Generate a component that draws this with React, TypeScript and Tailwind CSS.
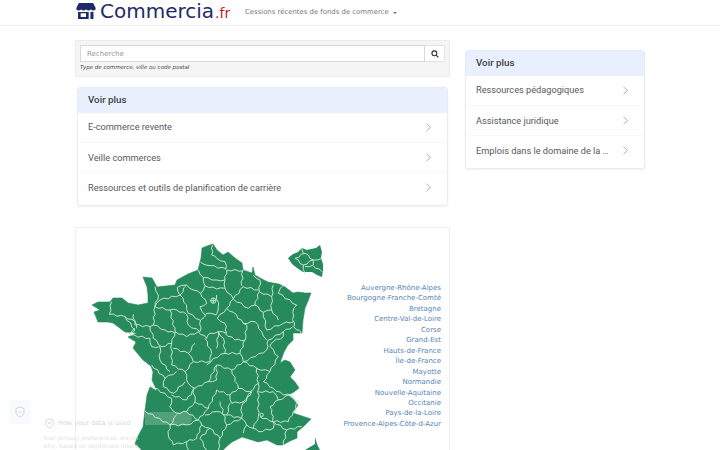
const dejavu = "font-['DejaVu_Sans',sans-serif]";

const regions = [
  "Auvergne-Rhône-Alpes",
  "Bourgogne-Franche-Comté",
  "Bretagne",
  "Centre-Val-de-Loire",
  "Corse",
  "Grand-Est",
  "Hauts-de-France",
  "Île-de-France",
  "Mayotte",
  "Normandie",
  "Nouvelle-Aquitaine",
  "Occitanie",
  "Pays-de-la-Loire",
  "Provence-Alpes-Côte-d-Azur",
];

const outline =
  "M202 248 L207 246 L213 244 L217 250 L223 255 L228 252 L235 258 L242 263 L243 270 L252 273 L253 267 L255 275 L262 279 L268 282 L273 283 L279 284 L285 287 L293 293 L298 292 L305 293 L311 293 L308 301 L305 308 L303 320 L302 333 L293 333 L293 340 L288 345 L284 352 L280 363 L285 360 L290 362 L295 370 L290 377 L295 382 L299 388 L294 392 L288 395 L293 399 L298 405 L293 413 L302 416 L311 419 L304 426 L297 432 L297 438 L290 441 L283 445 L277 445 L267 440 L258 442 L252 440 L242 437 L232 442 L225 448 L218 456 L142 456 L141 449 L135 444 L137 438 L143 427 L145 410 L147 395 L150 387 L157 391 L152 380 L153 372 L150 363 L152 367 L143 360 L133 348 L136 342 L128 337 L137 333 L125 332 L113 323 L108 322 L98 322 L94 312 L100 310 L92 305 L98 302 L110 302 L113 298 L122 298 L128 303 L138 305 L148 303 L148 295 L147 287 L143 277 L152 278 L157 287 L175 285 L177 280 L188 274 L198 270 L201 258 Z";

const inset = "M288 258 L293 254 L298 252 L302 248 L307 250 L311 249 L316 248 L320 245 L322 252 L321 258 L323 264 L323 270 L322 277 L317 275 L312 272 L303 272 L297 268 L292 264 Z";

const deptLines = [
  "M428 60 L425 90 L440 100 L465 110 L468 132",
  "M392 112 L420 122 L468 132",
  "M385 135 L400 158 L440 165 L465 165 L470 135 L520 137",
  "M400 158 L405 182 L392 205 L370 195 L350 180 L322 187",
  "M405 182 L440 192 L465 190 L490 222 L520 185 L565 195",
  "M465 165 L465 190",
  "M518 137 L515 182",
  "M550 150 L570 165 L568 200 L555 240 L580 262 L590 315",
  "M610 180 L605 215 L605 255 L625 285",
  "M640 180 L625 205 L680 240 L668 262 L672 305 L695 325",
  "M605 215 L568 200",
  "M490 222 L535 250 L555 240",
  "M605 255 L580 262",
  "M490 222 L470 250 L442 280",
  "M440 210 L445 245 L438 270 L410 265 L392 285",
  "M392 205 L410 235 L390 245 L405 270",
  "M350 180 L330 210 L350 240 L355 265 L390 285",
  "M322 187 L330 210 L270 225 L255 245",
  "M255 185 L265 210 L255 245 L300 255 L320 255 L350 268 L355 300 L390 320",
  "M255 245 L250 300 L285 315 L315 325",
  "M125 230 L118 268 L165 275 L195 290 L200 310",
  "M190 268 L195 300 L240 305 L250 300",
  "M165 275 L195 315 L180 325",
  "M195 310 L180 330 L240 340 L245 365",
  "M240 305 L250 340 L275 365 L305 355 L315 320 L300 255",
  "M315 320 L350 335 L385 320 L410 340 L420 325 L445 320",
  "M392 285 L390 320",
  "M442 280 L465 295 L470 325 L445 320 L440 370",
  "M470 250 L490 262 L520 295 L555 290 L575 320 L590 345",
  "M465 325 L495 345 L525 345 L530 300 L520 295",
  "M525 345 L510 385 L520 410 L555 395 L590 375 L595 345",
  "M590 315 L640 295 L670 290",
  "M595 345 L640 320 L668 305",
  "M640 320 L640 335 L610 350 L600 365 L625 395",
  "M445 320 L460 340 L465 385 L430 400 L410 420",
  "M465 385 L510 385",
  "M245 365 L270 365 L270 405 L300 440",
  "M305 355 L305 420 L345 440",
  "M375 355 L355 385 L370 410 L420 410 L425 385 L405 340",
  "M355 385 L310 370",
  "M370 410 L345 440 L355 475 L375 490 L415 470 L440 420 L485 435 L520 410",
  "M440 420 L440 465 L415 470",
  "M485 435 L505 490 L540 500 L565 475 L560 430 L520 410",
  "M560 430 L600 440 L625 395",
  "M600 440 L580 470 L610 490 L640 510 L665 510",
  "M245 420 L285 460 L320 440",
  "M285 460 L280 485 L310 505 L345 470",
  "M240 480 L305 520 L300 545",
  "M225 558 L300 600 L295 630",
  "M305 510 L350 525 L375 490",
  "M370 490 L375 530 L350 560 L320 565 L300 545",
  "M375 530 L415 550 L440 495 L480 510 L505 490",
  "M480 510 L485 535 L520 530 L545 500",
  "M480 535 L470 570 L515 580 L515 545 L545 500",
  "M350 560 L385 585 L405 560 L415 550",
  "M320 570 L300 600 L350 600 L385 585 L395 600 L380 640 L350 650",
  "M405 570 L440 560 L470 570",
  "M450 530 L470 600 L450 640 L420 610 L395 600",
  "M470 600 L515 580 L530 600 L550 610 L565 575 L565 475",
  "M565 500 L610 500 L625 525 L600 545 L610 575",
  "M625 525 L660 510 L685 530 L670 560 L655 590 L610 590 L570 575",
  "M610 590 L650 615 L695 605",
  "M650 615 L640 660",
  "M610 575 L610 610 L565 620 L550 610",
  "M530 600 L520 625",
  "M295 630 L310 660 L350 650",
  "M420 610 L390 640 L410 675",
  "M450 640 L445 675",
  "M350 650 L355 675",
  "M675 100 L705 85 L730 105 L700 120 L675 100",
  "M700 85 L695 70",
  "M730 105 L755 100",
  "M700 120 L705 145",
  "M730 105 L730 120 L705 125",
  "M730 122 L755 140",
];

// the department borders are jagged in the picture, so break each segment up a bit
function roughen(d: string) {
  const pts = d.replace("M", "").split(" L").map((p) => p.split(" ").map(Number));
  let out = `M${pts[0][0]} ${pts[0][1]}`;
  for (let i = 1; i < pts.length; i++) {
    const [x0, y0] = pts[i - 1];
    const [x1, y1] = pts[i];
    const len = Math.hypot(x1 - x0, y1 - y0) || 1;
    const steps = Math.max(1, Math.round(len / 12));
    for (let s = 1; s < steps; s++) {
      const t = s / steps;
      const off = (s + i) % 2 === 0 ? 2.5 : -2.5;
      const x = x0 + (x1 - x0) * t + (-(y1 - y0) / len) * off;
      const y = y0 + (y1 - y0) * t + ((x1 - x0) / len) * off;
      out += ` L${x.toFixed(1)} ${y.toFixed(1)}`;
    }
    out += ` L${x1} ${y1}`;
  }
  return out;
}

function FranceMap() {
  return (
    <svg viewBox="85 240 245 224" className="w-[245px] h-[224px] shrink-0">
      <path d={outline} fill="#268a5c" stroke="#268a5c" strokeWidth="0.6" />
      <path d={inset} fill="#268a5c" />
      <path d="M305 450 L315 444 L315 437 L317 444 L320 450 L318 464 L306 464 Z" fill="#268a5c" />
      <g transform="translate(70 225) scale(0.3333)" fill="none" stroke="#c4e5cf" strokeWidth="3" strokeLinejoin="round">
        {deptLines.map((d) => (
          <path key={d} d={roughen(d)} />
        ))}
        <circle cx="430" cy="227" r="8" />
        <path d="M422 227 L438 227 M430 219 L430 235" />
        <circle cx="575" cy="570" r="5" />
      </g>
    </svg>
  );
}

function StoreLogo() {
  return (
    <svg viewBox="0 0 22 18" className="w-[22px] h-[16px] shrink-0 mr-[3px]">
      <path d="M3 0 H19 L22 6 Q22 8.5 19.2 8.5 Q17 8.5 16.5 7 Q15.8 8.5 13.8 8.5 Q11.8 8.5 11 7 Q10.2 8.5 8.2 8.5 Q6.2 8.5 5.5 7 Q5 8.5 2.8 8.5 Q0 8.5 0 6 Z" fill="#1e2a69" />
      <path d="M2 10 H14 V18 H2 Z M5 11.5 V15.8 H11 V11.5 Z" fill="#1e2a69" fillRule="evenodd" />
      <rect x="16" y="10" width="3.4" height="8" fill="#1e2a69" />
    </svg>
  );
}

function Chevron() {
  return (
    <svg viewBox="0 0 6 10" className="w-[5px] h-[9px] shrink-0" fill="none" stroke="#9aa0a6" strokeWidth="1">
      <path d="M0.6 0.6 L5.4 5 L0.6 9.4" />
    </svg>
  );
}

function AdCard({ items, className }: { items: string[]; className: string }) {
  return (
    <div className={`rounded-[3px] border border-[#e8ecf7] bg-white shadow-[0_1px_2px_rgba(60,64,67,0.08)] font-['Roboto',sans-serif] ${className}`}>
      <div className="h-[25px] flex items-center px-[10px] bg-[#e8f0fe] text-[9.8px] font-medium text-[#3c4043] rounded-t-[3px]">
        Voir plus
      </div>
      {items.map((item, i) => (
        <div
          key={item}
          className={`h-[30px] flex items-center justify-between pl-[10px] pr-[16px] text-[9.2px] text-[#55595e] ${i > 0 ? "border-t border-[#f8f8f8]" : "-mt-px"}`}
        >
          <span className="truncate mr-[11px]">{item}</span>
          <Chevron />
        </div>
      ))}
    </div>
  );
}

export default function App() {
  return (
    <div className={`relative h-[450px] w-[720px] overflow-hidden bg-white ${dejavu}`}>
      <header className="h-[26px] border-b border-[#eeeeee] pl-[75px] flex items-start">
        <div className="flex items-start pt-[3px] w-[170px]">
          <StoreLogo />
          <span className="text-[20px] leading-[16px] text-[#1e2a69]">Commercia</span>
          <span className="text-[14px] leading-[16px] text-[#c4222f] ml-[1px] mt-[2px]">.fr</span>
        </div>
        <div className="flex items-center h-[25px] text-[6.9px] text-[#777777]">
          Cessions récentes de fonds de commerce
          <span className="ml-[4px] w-0 h-0 border-x-[2px] border-x-transparent border-t-[2px] border-t-[#777777]" />
        </div>
      </header>

      <main className="flex pl-[75px] pt-[14px]">
        <div className="w-[375px] shrink-0">
          <div className="h-[37px] bg-[#f5f5f5] border border-[#ececec] px-[4px] pt-[4px]">
            <div className="flex h-[17px] w-[365px]">
              <div className="flex-1 bg-white border border-[#d8d8d8] pl-[6px] pt-px flex items-center text-[7px] text-[#999999]">
                Recherche
              </div>
              <div className="w-[20px] bg-white border border-l-0 border-[#e4e4e4] flex items-center justify-center">
                <svg viewBox="0 0 12 12" className="w-[8px] h-[8px]" fill="none" stroke="#333333" strokeWidth="1.7">
                  <circle cx="5" cy="5" r="3.6" />
                  <path d="M7.8 7.8 L11 11" />
                </svg>
              </div>
            </div>
            <p className="mt-[1px] text-[5.5px] leading-[8px] italic text-[#444444]">Type de commerce, ville ou code postal</p>
          </div>

          <AdCard
            className="mt-[10px] mx-[2px] h-[119px]"
            items={["E-commerce revente", "Veille commerces", "Ressources et outils de planification de carrière"]}
          />

          <div className="mt-[21px] h-[260px] border border-[#eeeeee] flex pl-[9px] pt-[12px]">
            <FranceMap />
            <ul className="flex-1 pt-[43px] pr-[8px] text-right text-[7px] leading-[10.46px] text-[#5585b5]">
              {regions.map((r) => (
                <li key={r}>{r}</li>
              ))}
            </ul>
          </div>
        </div>

        <div className="w-[180px] ml-[15px] pt-[10px]">
          <AdCard
            className="h-[119px]"
            items={["Ressources pédagogiques", "Assistance juridique", "Emplois dans le domaine de la vente"]}
          />
        </div>
      </main>

      {/* consent banner fading in over the page */}
      <div className="absolute left-[9px] top-[400px] w-[22px] h-[24px] rounded-[5px] bg-[#f8fafd] flex items-center justify-center">
        <svg viewBox="0 0 24 24" className="w-[12px] h-[12px]" fill="none" stroke="#cdd5df" strokeWidth="2">
          <path d="M12 2 L20 5 V12 C20 17 16 20.5 12 22 C8 20.5 4 17 4 12 V5 Z" />
          <path d="M9 12 L11 14 L15 10" />
        </svg>
      </div>
      <div className="absolute left-[44px] top-[418px] flex items-center gap-[3px] text-[6.5px] text-[#d8d8d8]">
        <svg viewBox="0 0 24 24" className="w-[11px] h-[11px]" fill="none" stroke="#d5d5d5" strokeWidth="2">
          <path d="M12 2 L20 5 V12 C20 17 16 20.5 12 22 C8 20.5 4 17 4 12 V5 Z" />
          <circle cx="12" cy="11" r="2" />
        </svg>
        How your data is used
      </div>
      <div className="absolute left-[43px] top-[434px] w-[95px] overflow-hidden whitespace-nowrap text-[6px] leading-[7.5px] text-[#e4e4e4]">
        <p>Your privacy preferences are important</p>
        <p>why, based on legitimate interest, we may</p>
      </div>
      <div className="absolute left-[145px] top-[412px] w-[47px] h-[13px] rounded-r-full bg-white/20 blur-[0.5px]" />
    </div>
  );
}
